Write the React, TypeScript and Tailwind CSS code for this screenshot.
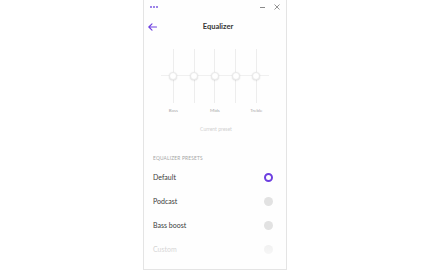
import React from "react";

const font = { fontFamily: "Lato, 'Noto Sans', sans-serif" };

function Radio({ selected, faded }: { selected?: boolean; faded?: boolean }) {
  if (selected) {
    return (
      <div className="w-[9px] h-[9px] rounded-full border-[2.4px] border-[#6d3fe0] bg-white" />
    );
  }
  return <div className={`w-[9px] h-[9px] rounded-full ${faded ? "bg-[#f0f0f0]" : "bg-[#e2e2e2]"}`} />;
}

export default function App() {
  const bands = ["Bass", "", "Mids", "", "Treble"];
  const presets = [
    { name: "Default", selected: true },
    { name: "Podcast" },
    { name: "Bass boost" },
    { name: "Custom", faded: true },
  ];
  return (
    <div className="w-[430px] h-[271px] bg-white flex justify-center overflow-hidden" style={font}>
      <div className="w-[144px] h-[270px] border-x border-b border-[#e4e4e4] bg-[#fefefe] flex flex-col relative overflow-hidden">
        {/* title bar */}
        <div className="h-[14px] flex items-center justify-between pl-[6px] pr-[6px]">
          <div className="flex gap-[1.5px]">
            <span className="w-[1.5px] h-[1.5px] bg-[#7b5ae0] rounded-full" />
            <span className="w-[1.5px] h-[1.5px] bg-[#7b5ae0] rounded-full" />
            <span className="w-[1.5px] h-[1.5px] bg-[#7b5ae0] rounded-full" />
          </div>
          <div className="flex items-center gap-[9px]">
            <div className="w-[5px] h-[1px] bg-[#8a8a8a]" />
            <svg width="6" height="6" viewBox="0 0 6 6">
              <path d="M0.5 0.5 L5.5 5.5 M5.5 0.5 L0.5 5.5" stroke="#777" strokeWidth="0.8" />
            </svg>
          </div>
        </div>
        {/* header */}
        <div className="h-[22px] mt-[2px] flex items-center relative">
          <svg className="absolute left-[4px]" width="9" height="8" viewBox="0 0 9 8">
            <path d="M8.5 4 H1 M4 0.8 L0.8 4 L4 7.2" stroke="#6d3fe0" strokeWidth="1.1" fill="none" strokeLinecap="round" strokeLinejoin="round" />
          </svg>
          <div className="w-full text-center text-[7.5px] font-bold text-[#333] pl-[6px]">Equalizer</div>
        </div>
        {/* sliders */}
        <div className="relative mt-[11px] h-[54px]">
          <div className="absolute left-[17px] right-[17px] top-[26px] h-px bg-[#f0f0f0]" />
          <div className="flex pl-[19px] h-full">
            {bands.map((_, i) => (
              <div key={i} className="w-[20.75px] flex justify-center relative h-full">
                <div className="w-px h-full bg-[#ededed]" />
                <div className="absolute top-[22.5px] w-[8px] h-[8px] rounded-full bg-white border border-[#eaeaea] shadow-[0_0.5px_1.5px_rgba(0,0,0,0.14)]" />
              </div>
            ))}
          </div>
        </div>
        <div className="flex pl-[19px] mt-[6px]">
          {bands.map((b, i) => (
            <div key={i} className="w-[20.75px] text-center text-[4.5px] text-[#a8a8a8] leading-none whitespace-nowrap flex justify-center">
              {b}
            </div>
          ))}
        </div>
        <div className="text-center text-[5px] text-[#d0d0d0] mt-[13px] leading-none pl-[2px]">Current preset</div>
        <div className="pl-[9px] text-[4.8px] tracking-[0.2px] text-[#a5a5a5] mt-[24px] leading-none">EQUALIZER PRESETS</div>
        <div className="flex flex-col mt-[5px]">
          {presets.map((p) => (
            <div key={p.name} className="h-[24px] flex items-center justify-between pl-[9px] pr-[13px]">
              <span className={`text-[7px] ${p.faded ? "text-[#c8c8c8]" : "text-[#3a3a3a]"}`}>{p.name}</span>
              <Radio selected={p.selected} faded={p.faded} />
            </div>
          ))}
        </div>
        <div className="absolute left-0 right-0 bottom-0 h-[26px] bg-gradient-to-b from-transparent to-[#fefefe]" />
      </div>
    </div>
  );
}
